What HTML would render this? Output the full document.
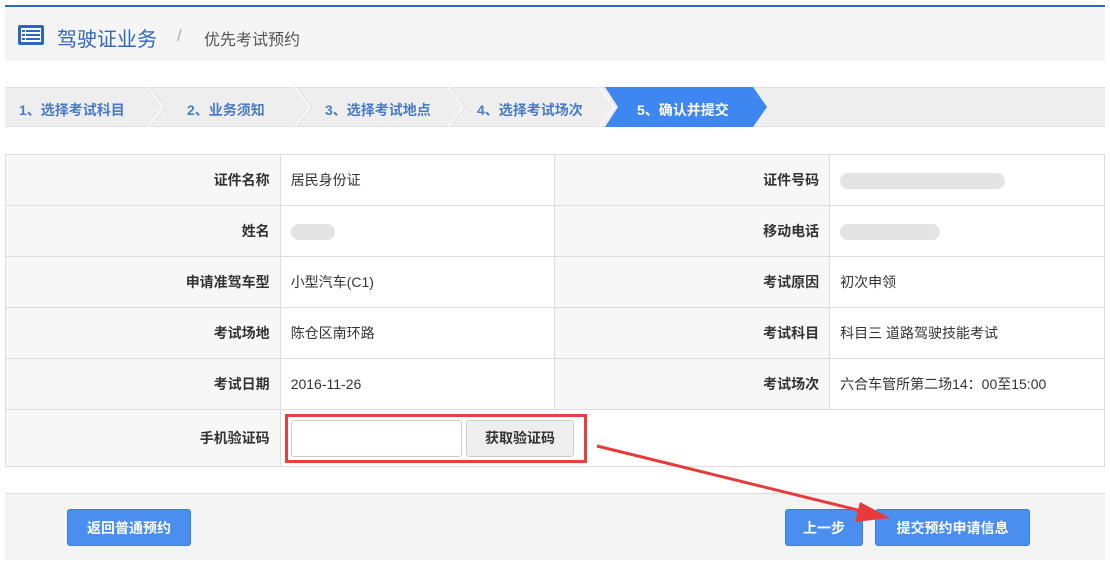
<!DOCTYPE html>
<html><head><meta charset="utf-8"><style>
*{margin:0;padding:0;box-sizing:border-box}
body{width:1110px;height:569px;background:#fff;font-family:"Liberation Sans","Noto Sans CJK SC",sans-serif;position:relative;overflow:hidden}
.top{position:absolute;left:5px;top:5px;width:1100px;height:56px;background:#f5f5f5;border-top:2px solid #2f67c0}
.top .t1{position:absolute;left:52px;top:16px;font-size:20px;color:#2f67c0}
.top .sl{position:absolute;left:172px;top:19px;font-size:17px;color:#aaa}
.top .t2{position:absolute;left:199px;top:19px;font-size:16px;color:#555}
.steps{position:absolute;left:5px;top:87px;width:1100px;height:40px;background:#eee;border-top:1px solid #e0e0e0;border-bottom:1px solid #e0e0e0}
.st{position:absolute;top:12px;font-size:14px;font-weight:bold;color:#4a7bc6}
table{position:absolute;left:5px;top:154px;width:1100px;border-collapse:collapse;font-size:14px}
td{border:1px solid #ddd;height:51px;padding:0 10px;color:#333}
td.l{background:#f7f7f7;text-align:right;font-weight:bold;width:275px}
td.v{width:275px}
.blur{display:inline-block;height:16px;background:#e4e4e4;border-radius:8px;vertical-align:middle}
.foot{position:absolute;left:5px;top:493px;width:1100px;height:67px;background:#f4f4f4;border-top:1px solid #ddd}
.btn{position:absolute;background:#4a8ef0;color:#fff;font-size:14px;font-weight:bold;border-radius:3px;text-align:center;line-height:36px;height:37px;border:1px solid #3b7fe0}
</style></head><body>
<div class="top">
<svg style="position:absolute;left:12px;top:17px" width="28" height="22" viewBox="0 0 28 22"><rect x="1" y="1" width="26" height="20" rx="2" fill="#2f67c0"/><rect x="4" y="4" width="20" height="14" fill="#fff"/><g fill="#2f67c0"><rect x="5" y="6" width="3" height="2"/><rect x="9" y="6" width="14" height="2"/><rect x="5" y="10" width="3" height="2"/><rect x="9" y="10" width="14" height="2"/><rect x="5" y="14" width="3" height="2"/><rect x="9" y="14" width="14" height="2"/></g></svg>
<div class="t1">驾驶证业务</div><div class="sl">/</div><div class="t2">优先考试预约</div>
</div>
<div class="steps">
<svg style="position:absolute;left:0;top:-1px" width="1100" height="40"><g fill="none" stroke="#fafafa" stroke-width="1.5"><path d="M143 0 L158 20 L143 40"/><path d="M290 0 L305 20 L290 40"/><path d="M443 0 L458 20 L443 40"/><path d="M594 0 L609 20 L594 40"/></g><g fill="none" stroke="#e2e2e2" stroke-width="1"><path d="M145 0 L160 20 L145 40"/><path d="M292 0 L307 20 L292 40"/><path d="M445 0 L460 20 L445 40"/></g><path d="M600 0 L748 0 L762 20 L748 40 L600 40 L613 20 Z" fill="#3e86f0"/></svg>
<div class="st" style="left:14px">1、选择考试科目</div>
<div class="st" style="left:182px">2、业务须知</div>
<div class="st" style="left:320px">3、选择考试地点</div>
<div class="st" style="left:472px">4、选择考试场次</div>
<div class="st" style="left:632px;color:#fff">5、确认并提交</div>
</div>
<table>
<tr><td class="l">证件名称</td><td class="v">居民身份证</td><td class="l">证件号码</td><td class="v"><span class="blur" style="width:165px"></span></td></tr>
<tr><td class="l">姓名</td><td class="v"><span class="blur" style="width:44px"></span></td><td class="l">移动电话</td><td class="v"><span class="blur" style="width:100px"></span></td></tr>
<tr><td class="l">申请准驾车型</td><td class="v">小型汽车(C1)</td><td class="l">考试原因</td><td class="v">初次申领</td></tr>
<tr><td class="l">考试场地</td><td class="v">陈仓区南环路</td><td class="l">考试科目</td><td class="v">科目三 道路驾驶技能考试</td></tr>
<tr><td class="l">考试日期</td><td class="v">2016-11-26</td><td class="l">考试场次</td><td class="v">六合车管所第二场14：00至15:00</td></tr>
<tr><td class="l" style="height:57px">手机验证码</td><td colspan="3"></td></tr>
</table>
<div style="position:absolute;left:285px;top:414px;width:302px;height:49px;border:3px solid #e84040"></div>
<div style="position:absolute;left:291px;top:420px;width:171px;height:37px;border:1px solid #ccc;border-radius:3px;background:#fff"></div>
<div style="position:absolute;left:466px;top:420px;width:108px;height:37px;border:1px solid #ccc;border-radius:3px;background:#eee;text-align:center;line-height:35px;font-size:14px;font-weight:bold;color:#333">获取验证码</div>
<div class="foot"></div>
<div class="btn" style="left:67px;top:509px;width:124px">返回普通预约</div>
<div class="btn" style="left:785px;top:509px;width:78px">上一步</div>
<div class="btn" style="left:875px;top:509px;width:155px">提交预约申请信息</div>
<svg style="position:absolute;left:0;top:0" width="1110" height="569"><path d="M597 446 L870 513" stroke="#e83a3a" stroke-width="3"/><path d="M860 502 L890 518 L855 522 Z" fill="#e83a3a"/></svg>
</body></html>
